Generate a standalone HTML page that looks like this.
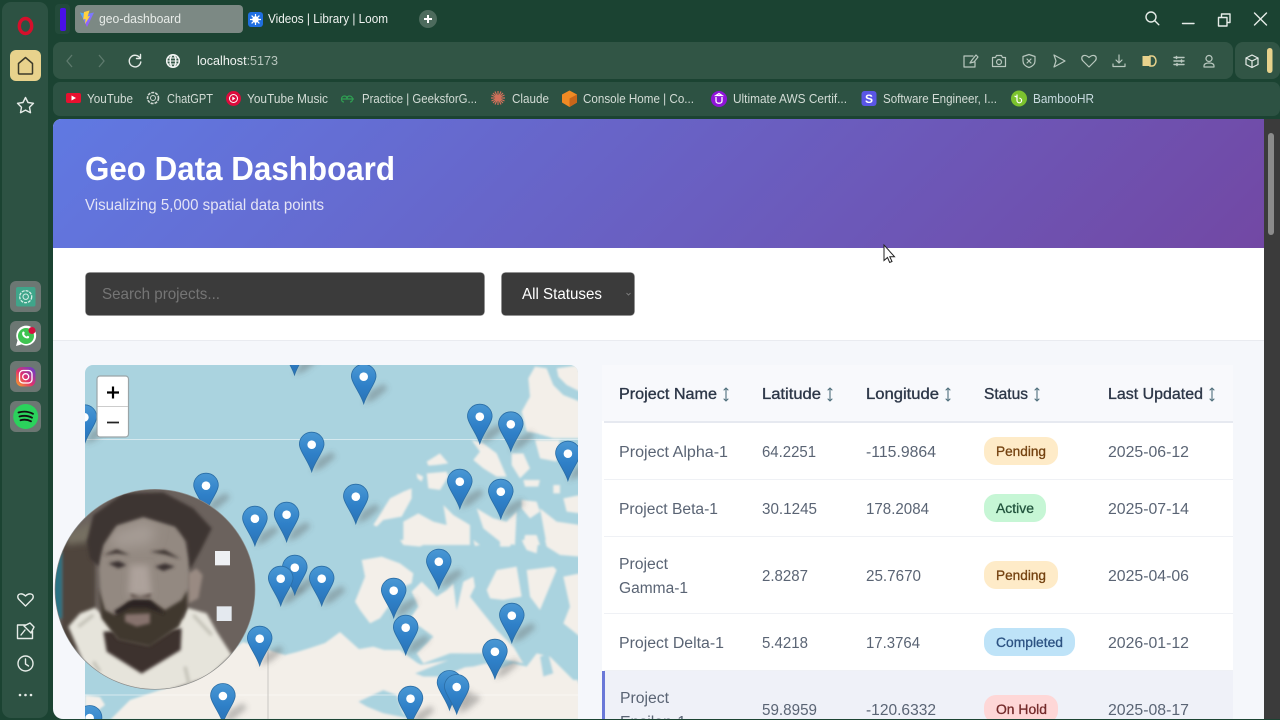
<!DOCTYPE html>
<html lang="en">
<head>
<meta charset="utf-8">
<title>geo-dashboard</title>
<style>
html,body{margin:0;padding:0;width:1280px;height:720px;overflow:hidden;background:#1b4332}
svg{position:absolute;left:0;top:0;display:block}
text{font-family:"Liberation Sans",sans-serif;white-space:pre}
.tb{font-size:13px;fill:#dfe6e1}
.bm{font-size:12.5px;fill:#d3dcd6}
.th{font-size:15.5px;fill:#2d3748;stroke:#2d3748;stroke-width:.35px}
.td{font-size:15.5px;fill:#5a6474}
.bd{font-size:13.5px;stroke-width:.3px}
.ic{fill:none;stroke:#b9c8bf;stroke-width:1.2;stroke-linecap:round;stroke-linejoin:round}
.wi{fill:none;stroke:#e6ece8;stroke-width:1.4;stroke-linecap:round;stroke-linejoin:round}
.ar{fill:none;stroke:#4f6f7c;stroke-width:1.1;stroke-linecap:round;stroke-linejoin:round}
</style>
</head>
<body>
<svg width="1280" height="720" viewBox="0 0 1280 720" xmlns="http://www.w3.org/2000/svg">
<defs>
<linearGradient id="hdr" gradientUnits="userSpaceOnUse" x1="323.7" y1="-150.8" x2="993.3" y2="518.8"><stop offset="0" stop-color="#6079e2"/><stop offset="1" stop-color="#7248a4"/></linearGradient>
<linearGradient id="pg" x1="0" y1="0" x2="0" y2="1"><stop offset="0" stop-color="#4a98d4"/><stop offset=".55" stop-color="#2f80c8"/><stop offset="1" stop-color="#2a72b5"/></linearGradient>
<linearGradient id="ig" x1="0" y1="1" x2="1" y2="0"><stop offset="0" stop-color="#f9a825"/><stop offset=".45" stop-color="#e1306c"/><stop offset="1" stop-color="#5b3fd6"/></linearGradient>
<linearGradient id="vt" x1="0" y1="0" x2="1" y2="1"><stop offset="0" stop-color="#41b8ff"/><stop offset="1" stop-color="#bd34fe"/></linearGradient>
<filter id="b1" x="-10%" y="-10%" width="120%" height="120%"><feGaussianBlur stdDeviation="1.100"/></filter>
<filter id="b2" x="-30%" y="-30%" width="160%" height="160%"><feGaussianBlur stdDeviation="3"/></filter>
<filter id="f4" x="-30%" y="-30%" width="160%" height="160%"><feGaussianBlur stdDeviation="5"/></filter>
<filter id="f8" x="-40%" y="-40%" width="180%" height="180%"><feGaussianBlur stdDeviation="10"/></filter>
<filter id="f16" x="-50%" y="-50%" width="200%" height="200%"><feGaussianBlur stdDeviation="18"/></filter>
<clipPath id="mapc"><path d="M85 720V373a8 8 0 0 1 8-8H570a8 8 0 0 1 8 8V720Z"/></clipPath>
<clipPath id="pagec"><path d="M53 127a8 8 0 0 1 8-8H1264V719H63a10 10 0 0 1-10-10Z"/></clipPath>
<clipPath id="camc"><circle cx="315" cy="313" r="299"/></clipPath>
<symbol id="p" overflow="visible"><path d="M0-12.5C-7-12.5-12.3-7-12.3-.5-12.3 6-3 17 0 27 3 17 12.3 6 12.3-.5 12.3-7 7-12.5 0-12.5Z" fill="url(#pg)" stroke="#2b6ea6" stroke-width=".8"/><circle r="4.300" fill="#fff"/></symbol>
<symbol id="s" overflow="visible"><path d="M0 27L7 14 20 7 24 12 11 23Z" fill="#555" fill-opacity=".36"/></symbol>
</defs>

<!-- browser chrome -->
<rect width="1280" height="720" fill="#1b4332"/>
<rect x="2" y="2" width="46" height="716" rx="9" fill="#2d5243"/>
<rect x="55" y="4" width="15" height="30" rx="4" fill="#234a3a"/>
<rect x="60" y="8" width="6" height="23" rx="2" fill="#4a10e8"/>
<rect x="75" y="5" width="168" height="28" rx="4" fill="#7c8984"/>
<path d="M80 12.500l7 1.500 7-1.500-7 14.500Z" fill="url(#vt)"/><path d="M89.500 10.500l-5.500 1.500-.8 7.500 2.400-.5-.6 5 5-8-2.400.5Z" fill="#ffd23f"/>
<text class="tb" x="99" y="23" textLength="82" lengthAdjust="spacingAndGlyphs" style="fill:#e8ece9">geo-dashboard</text>
<rect x="248" y="12" width="15" height="15" rx="3" fill="#1f6fe0"/>
<circle cx="255.500" cy="19.500" r="3.200" fill="#fff"/><path d="M255.500 14v11M250 19.500h11M251.600 15.600l7.800 7.800M259.400 15.600l-7.800 7.800" stroke="#fff" stroke-width="1.200"/>
<text class="tb" x="268" y="23" textLength="120" lengthAdjust="spacingAndGlyphs" style="fill:#f0f3f1">Videos | Library | Loom</text>
<circle cx="428" cy="19" r="9" fill="#4d6b5d"/><path d="M428 15v8M424 19h8" stroke="#fff" stroke-width="2"/>

<rect x="53" y="42" width="1180" height="37" rx="8" fill="#315545"/>
<rect x="1235" y="42" width="45" height="37" rx="8" fill="#315545"/>
<rect x="53" y="82" width="1227" height="34" rx="7" fill="#2d5243"/>

<path d="M72 55l-5 6 5 6" fill="none" stroke="#5e7a6d" stroke-width="1.300"/>
<path d="M99 55l5 6-5 6" fill="none" stroke="#5e7a6d" stroke-width="1.300"/>
<path class="wi" d="M140 58a5.800 5.800 0 1 0 .8 4M140.500 54.500v4h-4"/>
<g fill="none" stroke="#f2f5f3" stroke-width="1.500"><circle cx="173" cy="61" r="6.300"/><ellipse cx="173" cy="61" rx="2.800" ry="6.300"/><path d="M167 61h12M168 58h10M168 64h10" stroke-width="1.100"/></g>
<text class="tb" x="197" y="65" textLength="81" lengthAdjust="spacingAndGlyphs"><tspan fill="#f0f3f1">localhost</tspan><tspan fill="#b7c5bd">:5173</tspan></text>

<!-- toolbar icons -->
<g class="ic">
<path d="M973 56h-9v11h11v-5M970 63l2-3 4-5 2 2-4 5Z"/>
<path d="M992.500 57.500h3l1-2h5l1 2h3v9h-13ZM999 59.500a2.500 2.500 0 1 0 .01 0"/>
<path d="M1029 54.500l6 2v4.500c0 3.500-3 5.500-6 6.500-3-1-6-3-6-6.500v-4.500ZM1027 59l4 4M1031 59l-4 4"/>
<path d="M1054 55l11 6-11 6 2-6Z"/>
<path d="M1089 67l-6-6c-2-2-1.500-5 1-5.500 2-.4 3.500.5 5 2 1.500-1.500 3-2.400 5-2 2.500.5 3 3.500 1 5.500Z"/>
<path d="M1119 55v8M1116 60l3 3 3-3M1113 64v2.500h12V64"/>
<path d="M1174 57.500h10M1174 61h10M1174 64.500h10" style="stroke-width:1.400"/>
<path d="M1176.500 56.500v2M1181.500 60v2M1177 63.500v2" style="stroke-width:1.600"/>
<path d="M1209 55.500a3 3 0 1 0 .01 0M1204 67v-1c0-2 2-3 5-3s5 1 5 3v1Z"/>
<path d="M1252 55l6 3v6.500l-6 3-6-3V58ZM1246 58l6 3 6-3M1252 61v6.500" style="stroke:#e6ece8"/>
</g>
<path d="M1142.500 56h7.500v10h-7.500Z" fill="#e8d28c"/><path d="M1150 56h2c2 0 4 2 4 5s-2 5-4 5h-2Z" fill="none" stroke="#e8d28c" stroke-width="1.500"/>
<rect x="1267" y="48" width="5.500" height="25" rx="2.700" fill="#e8d28c"/>

<!-- window controls -->
<g class="wi">
<circle cx="1151" cy="17" r="5"/><path d="M1154.800 20.800l4 4"/>
<path d="M1182.500 23.500h11.500"/>
<path d="M1218.500 17.500h8.500v8.500h-8.500ZM1221.500 17.500v-3.500h8.500v8.500h-3"/>
<path d="M1254.500 13l12 12M1266.500 13l-12 12"/>
</g>

<!-- bookmarks -->
<rect x="66" y="93" width="15" height="10" rx="2" fill="#e8102f"/><path d="M71.500 95.500l4.500 2.500-4.500 2.500Z" fill="#fff"/>
<text class="bm" x="87" y="103" textLength="46" lengthAdjust="spacingAndGlyphs">YouTube</text>
<circle cx="153" cy="98" r="5.500" fill="none" stroke="#cfd8d2" stroke-width="1.600" stroke-dasharray="3 1"/><circle cx="153" cy="98" r="2.500" fill="none" stroke="#cfd8d2"/>
<text class="bm" x="167" y="103" textLength="46" lengthAdjust="spacingAndGlyphs">ChatGPT</text>
<circle cx="233.500" cy="98.500" r="7.500" fill="#dc0b3c"/><circle cx="233.500" cy="98.500" r="4" fill="none" stroke="#fff"/><path d="M232.300 96.500l3 2-3 2Z" fill="#fff"/>
<text class="bm" x="247" y="103" textLength="81" lengthAdjust="spacingAndGlyphs">YouTube Music</text>
<path d="M341 99h6c0-2-1-3-2.500-3s-3 1-3 3 1 3 2.500 3M354 99h-7c0-2 1-3 2.500-3s3 1 3 3-1 3-2.500 3" fill="none" stroke="#2f9e52" stroke-width="1.200"/>
<text class="bm" x="362" y="103" textLength="115" lengthAdjust="spacingAndGlyphs">Practice | GeeksforG...</text>
<path d="M498 91v14M491 98h14M493 93l10 10M503 93l-10 10M495 91.500l6 13M501 91.500l-6 13M491.500 95l13 6M504.500 95l-13 6" stroke="#d2705a" stroke-width="1.200"/>
<text class="bm" x="512" y="103" textLength="37" lengthAdjust="spacingAndGlyphs">Claude</text>
<path d="M569.500 90.500l7.500 4v8l-7.500 4.500-7.500-4.500v-8Z" fill="#f08a24"/><path d="M569.500 98.500l7.500-4v8l-7.500 4.500Z" fill="#c9661a"/>
<text class="bm" x="583" y="103" textLength="111" lengthAdjust="spacingAndGlyphs">Console Home | Co...</text>
<circle cx="719" cy="99" r="8" fill="#8f14d8"/><path d="M716 97v4c0 3 6 3 6 0v-4M719 93.500l3 2h-6Z" fill="none" stroke="#fff" stroke-width="1.300"/>
<text class="bm" x="733" y="103" textLength="114" lengthAdjust="spacingAndGlyphs">Ultimate AWS Certif...</text>
<rect x="861.500" y="91" width="15" height="15" rx="3" fill="#5a56e6"/>
<text x="869" y="103" text-anchor="middle" style="font-size:12px;font-weight:700;fill:#fff">S</text>
<text class="bm" x="883" y="103" textLength="114" lengthAdjust="spacingAndGlyphs">Software Engineer, I...</text>
<circle cx="1019" cy="98.500" r="8" fill="#7cc22e"/><path d="M1017 94.500v6a2.300 2.300 0 1 0 2.300-2.300M1014.500 96l2 1" fill="none" stroke="#fff" stroke-width="1.200"/>
<text class="bm" x="1033" y="103" textLength="61" lengthAdjust="spacingAndGlyphs" style="fill:#c9dbe0">BambooHR</text>

<!-- sidebar -->
<ellipse cx="25.500" cy="26" rx="6.200" ry="7.500" fill="none" stroke="#d50f2b" stroke-width="3.400"/>
<rect x="10" y="50" width="31" height="31" rx="6" fill="#e8d28c"/>
<path d="M18.500 73V63.500l7-6 7 6V73a1 1 0 0 1-1 1h-12a1 1 0 0 1-1-1Z" fill="none" stroke="#3c3a2a" stroke-width="1.500" stroke-linejoin="round"/>
<path class="wi" d="M25.500 97.500l2.500 5 5.500.8-4 3.900 1 5.500-5-2.600-5 2.600 1-5.500-4-3.900 5.500-.8Z"/>
<rect x="10" y="281" width="31" height="31" rx="6" fill="#6c7773"/>
<rect x="16" y="287" width="19.500" height="19.500" rx="2" fill="#3fa58a"/>
<circle cx="25.700" cy="296.700" r="6" fill="none" stroke="#d7efe8" stroke-width="1.300" stroke-dasharray="3 1"/><circle cx="25.700" cy="296.700" r="2.700" fill="none" stroke="#d7efe8"/>
<rect x="10" y="321" width="31" height="31" rx="6" fill="#6c7773"/>
<path d="M16 346l1.500-5.500a10 10 0 1 1 4 3.900Z" fill="#fff"/><circle cx="26" cy="336" r="8" fill="#3fc451"/>
<path d="M22.500 332c1-1 1.800-.6 2.300 1l-.7 1c.5 1.200 1.300 2 2.600 2.600l1-.8c1.500.5 2 1.300 1 2.300-3.500 1.500-8-3-6.200-6.100Z" fill="#fff"/>
<circle cx="32" cy="330.500" r="3.500" fill="#d3103f"/>
<rect x="10" y="361" width="31" height="31" rx="6" fill="#6c7773"/>
<rect x="16" y="367" width="19.500" height="19.500" rx="6" fill="url(#ig)"/>
<rect x="19.500" y="370.500" width="12.500" height="12.500" rx="3.500" fill="none" stroke="#fff" stroke-width="1.300"/><circle cx="25.700" cy="376.700" r="3" fill="none" stroke="#fff" stroke-width="1.300"/>
<rect x="10" y="401" width="31" height="31" rx="6" fill="#6c7773"/>
<circle cx="25.700" cy="416.500" r="12.500" fill="#2bd25c"/>
<path d="M18.500 412.500c5-1.500 10-1 14.500 1.300M19.500 416.500c4.500-1.200 9-.7 12.500 1.200M20.500 420.300c3.500-1 7.500-.6 10.500 1" fill="none" stroke="#111" stroke-width="1.800" stroke-linecap="round"/>
<g class="wi">
<path d="M25.500 606l-6.500-6.500c-2-2-1.500-5 1-5.500 2.300-.5 4 .5 5.500 2 1.500-1.500 3.200-2.500 5.500-2 2.500.5 3 3.500 1 5.500Z"/>
<path d="M26 625h-8.500v13.500h15V631M21 635l4-5M24 626l6-3 4 4-3 6Z"/>
<circle cx="25.500" cy="663.500" r="7.500"/><path d="M25.500 659v5l3 2"/>
</g>
<circle cx="20" cy="695" r="1.300" fill="#e6ece8"/><circle cx="25.500" cy="695" r="1.300" fill="#e6ece8"/><circle cx="31" cy="695" r="1.300" fill="#e6ece8"/>

<!-- scrollbar -->
<rect x="1264" y="119" width="16" height="600" fill="#3b3b3b"/>
<rect x="1268" y="133" width="6" height="102" rx="3" fill="#8b8b8b"/>

<!-- page -->
<g clip-path="url(#pagec)">
<rect x="53" y="119" width="1211" height="601" fill="#f5f7fb"/>
<rect x="53" y="119" width="1211" height="129" fill="url(#hdr)"/>
<text x="85" y="180" textLength="310" lengthAdjust="spacingAndGlyphs" style="font-size:33px;font-weight:700;fill:#fff">Geo Data Dashboard</text>
<text x="85" y="210" textLength="239" lengthAdjust="spacingAndGlyphs" style="font-size:15.5px;fill:#e4e4f6">Visualizing 5,000 spatial data points</text>
<rect x="53" y="248" width="1211" height="92" fill="#fff"/>
<rect x="53" y="340" width="1211" height="1" fill="#e9ebf0"/>
<rect x="85.500" y="272.500" width="399" height="43" rx="4" fill="#3b3b3b" stroke="#8a8a8a" stroke-width=".6"/>
<text x="102" y="299" textLength="118" lengthAdjust="spacingAndGlyphs" style="font-size:16px;fill:#757575">Search projects...</text>
<rect x="501.500" y="272.500" width="133" height="43" rx="4" fill="#3b3b3b" stroke="#8a8a8a" stroke-width=".6"/>
<text x="522" y="299" textLength="80" lengthAdjust="spacingAndGlyphs" style="font-size:16px;fill:#fff">All Statuses</text>
<path d="M626.500 293l2 2 2-2" fill="none" stroke="#888" stroke-width=".8"/>

<!-- map -->
<g clip-path="url(#mapc)">
<rect x="85" y="365" width="493" height="355" fill="#aad3df"/>
<g fill="#f3efe9" filter="url(#b1)">
<path d="M110 720L130 700 190 680 243 642 262 648 285 655 297 652 310 648 325 643 340 632 360 650 400 650 420 665 450 660 480 680 578 680V720Z"/>
<path d="M85 695L100 697 105 705 92 715 85 716Z"/>
<g transform="translate(340 365) scale(.3333)">
<path d="M585 5L620 10 640 60 670 90 720 110V220H640L590 205 560 200 545 140 570 95 565 40Z"/>
<path d="M650 10L720 0V80L680 60 655 35Z"/>
<path d="M395 225L430 235 470 265 500 335 470 335 430 310 400 285 420 260Z"/>
<path d="M515 265L550 265 570 310 540 340 515 300Z"/>
<path d="M585 225H660L650 290 600 280Z"/>
<path d="M260 290L300 265 325 295 290 300 265 302Z"/>
<path d="M260 325L320 320 325 335 300 375 265 370Z"/>
<path d="M230 325L250 335 245 350 232 340Z"/>
<path d="M100 480L150 400 190 380 215 370 215 400 185 455 130 465 110 485Z"/>
<path d="M190 470L235 445 280 470 320 480 310 420 340 450 390 480V540H190Z"/>
<path d="M410 430L460 460 500 470 530 440 525 540 480 530 430 490Z"/>
<path d="M545 405L590 410 600 440 570 460 545 430Z"/>
<path d="M600 430L650 470 720 480V540H620Z"/>
<path d="M640 360H660V385H640ZM550 345H600L595 365 555 365Z"/>
<path d="M670 400L720 390V445L680 440Z"/>
<path d="M555 510H590L600 540H550Z"/>
</g>
<g transform="translate(340 540) scale(.3333)">
<path d="M65 60L125 50 180 70 220 100 215 130 165 150 160 180 120 235 90 250 60 210 45 185 75 110Z"/>
<path d="M0 280L40 330 100 320 180 345 245 375 230 400 260 410 310 390 340 385 400 380 440 370 470 390 520 370 560 380 590 340 630 350 700 420 720 430V540H0Z"/>
<path d="M215 155L245 125 290 170 320 150 340 130 350 210 370 125 400 110 405 140 390 170 430 220 470 270 520 320 550 370 500 360 470 340 400 340 330 340 250 370 230 340 260 310 280 290 240 260 200 250 235 200Z"/>
<path d="M440 150L470 90 530 80 545 170 490 180 450 175Z"/>
<path d="M560 90L640 80 650 90 625 150 600 210 570 170Z"/>
<path d="M670 110L720 100V290L670 250 690 200Z"/>
<path d="M180 0H280L240 20 190 15ZM400 0L420 15 405 18ZM480 0H520L510 20 480 20ZM545 0H595L590 40 560 30ZM615 0H720V50L660 45 620 20Z"/>
<path d="M55 485L130 450 170 465 190 520 230 540 130 520 80 500Z" fill="#aad3df"/>
<path d="M225 400L300 370 380 340 440 350 440 370 380 380 310 410 250 410Z" fill="#aad3df"/>
<path d="M600 350L625 340 640 400 610 410Z" fill="#aad3df"/>
</g>
</g>
<path d="M85 439.500H578M85 695H578" stroke="#fff" stroke-opacity=".5" stroke-width="1"/>
<path d="M268 641V720" stroke="#c9c7c2" stroke-width="1"/>
<g filter="url(#b2)">
<use href="#s" x="294.500" y="348"/><use href="#s" x="363.700" y="376.700"/><use href="#s" x="479.800" y="416.700"/><use href="#s" x="510.800" y="424.300"/><use href="#s" x="84.400" y="417.300"/><use href="#s" x="311.700" y="444.700"/><use href="#s" x="567.900" y="453.700"/><use href="#s" x="206" y="485.700"/><use href="#s" x="355.800" y="496.700"/><use href="#s" x="459.800" y="481.700"/><use href="#s" x="500.800" y="491.700"/><use href="#s" x="254.900" y="518.700"/><use href="#s" x="286.600" y="514.700"/><use href="#s" x="294.800" y="567.700"/><use href="#s" x="280.700" y="578.700"/><use href="#s" x="321.700" y="578.700"/><use href="#s" x="438.800" y="561.700"/><use href="#s" x="393.700" y="590.700"/><use href="#s" x="405.700" y="627.700"/><use href="#s" x="511.800" y="615.700"/><use href="#s" x="494.900" y="651.700"/><use href="#s" x="259.700" y="638.700"/><use href="#s" x="449.500" y="683"/><use href="#s" x="456.700" y="687"/><use href="#s" x="410.500" y="698.700"/><use href="#s" x="222.900" y="696"/><use href="#s" x="89.600" y="718"/>
</g>
<use href="#p" x="294.500" y="348"/><use href="#p" x="363.700" y="376.700"/><use href="#p" x="479.800" y="416.700"/><use href="#p" x="510.800" y="424.300"/><use href="#p" x="84.400" y="417.300"/><use href="#p" x="311.700" y="444.700"/><use href="#p" x="567.900" y="453.700"/><use href="#p" x="206" y="485.700"/><use href="#p" x="355.800" y="496.700"/><use href="#p" x="459.800" y="481.700"/><use href="#p" x="500.800" y="491.700"/><use href="#p" x="254.900" y="518.700"/><use href="#p" x="286.600" y="514.700"/><use href="#p" x="294.800" y="567.700"/><use href="#p" x="280.700" y="578.700"/><use href="#p" x="321.700" y="578.700"/><use href="#p" x="438.800" y="561.700"/><use href="#p" x="393.700" y="590.700"/><use href="#p" x="405.700" y="627.700"/><use href="#p" x="511.800" y="615.700"/><use href="#p" x="494.900" y="651.700"/><use href="#p" x="259.700" y="638.700"/><use href="#p" x="449.500" y="683"/><use href="#p" x="456.700" y="687"/><use href="#p" x="410.500" y="698.700"/><use href="#p" x="222.900" y="696"/><use href="#p" x="89.600" y="718"/>
<rect x="97" y="376" width="31.500" height="61" rx="3" fill="#fff" stroke="#9aa5a8" stroke-width="1.200"/>
<path d="M97.500 406.500h30.500" stroke="#ccc"/>
<path d="M107 392.500h12M113 386.500v12" stroke="#000" stroke-width="2.200"/>
<path d="M107 422.500h12" stroke="#222" stroke-width="1.800"/>
</g>

<!-- table -->
<rect x="602" y="365" width="631" height="355" fill="#fff"/>
<rect x="602" y="365" width="631" height="56" fill="#f8f9fc"/>
<rect x="604" y="421" width="629" height="2" fill="#e6e9f0"/>
<path d="M604 479.500H1233M604 536.500H1233M604 613.500H1233M604 670.500H1233" stroke="#eff1f5"/>
<rect x="602" y="671" width="631" height="49" fill="#eff1f8"/>
<rect x="602" y="671" width="3" height="49" fill="#6a78d8"/>

<text class="th" x="619" y="399" textLength="98" lengthAdjust="spacingAndGlyphs">Project Name</text>
<text class="th" x="762" y="399" textLength="59" lengthAdjust="spacingAndGlyphs">Latitude</text>
<text class="th" x="866" y="399" textLength="73" lengthAdjust="spacingAndGlyphs">Longitude</text>
<text class="th" x="984" y="399" textLength="44" lengthAdjust="spacingAndGlyphs">Status</text>
<text class="th" x="1108" y="399" textLength="95" lengthAdjust="spacingAndGlyphs">Last Updated</text>
<g class="ar">
<path d="M726 388v13M724 390l2-2 2 2M724 399l2 2 2-2"/>
<path d="M830 388v13M828 390l2-2 2 2M828 399l2 2 2-2"/>
<path d="M948 388v13M946 390l2-2 2 2M946 399l2 2 2-2"/>
<path d="M1037 388v13M1035 390l2-2 2 2M1035 399l2 2 2-2"/>
<path d="M1212 388v13M1210 390l2-2 2 2M1210 399l2 2 2-2"/>
</g>

<text class="td" x="619" y="457" textLength="109" lengthAdjust="spacingAndGlyphs">Project Alpha-1</text>
<text class="td" x="762" y="457" textLength="54" lengthAdjust="spacingAndGlyphs">64.2251</text>
<text class="td" x="866" y="457" textLength="70" lengthAdjust="spacingAndGlyphs">-115.9864</text>
<rect x="984" y="437" width="74" height="28" rx="12" fill="#feebc8"/>
<text class="bd" x="996" y="456" textLength="50" lengthAdjust="spacingAndGlyphs" fill="#744210" stroke="#744210">Pending</text>
<text class="td" x="1108" y="457" textLength="81" lengthAdjust="spacingAndGlyphs">2025-06-12</text>

<text class="td" x="619" y="514" textLength="99" lengthAdjust="spacingAndGlyphs">Project Beta-1</text>
<text class="td" x="762" y="514" textLength="55" lengthAdjust="spacingAndGlyphs">30.1245</text>
<text class="td" x="866" y="514" textLength="63" lengthAdjust="spacingAndGlyphs">178.2084</text>
<rect x="984" y="494" width="62" height="28" rx="12" fill="#c6f6d5"/>
<text class="bd" x="996" y="513" textLength="38" lengthAdjust="spacingAndGlyphs" fill="#22543d" stroke="#22543d">Active</text>
<text class="td" x="1108" y="514" textLength="81" lengthAdjust="spacingAndGlyphs">2025-07-14</text>

<text class="td" x="619" y="569" textLength="49" lengthAdjust="spacingAndGlyphs">Project</text>
<text class="td" x="619" y="593" textLength="69" lengthAdjust="spacingAndGlyphs">Gamma-1</text>
<text class="td" x="762" y="581" textLength="46" lengthAdjust="spacingAndGlyphs">2.8287</text>
<text class="td" x="866" y="581" textLength="55" lengthAdjust="spacingAndGlyphs">25.7670</text>
<rect x="984" y="561" width="74" height="28" rx="12" fill="#feebc8"/>
<text class="bd" x="996" y="580" textLength="50" lengthAdjust="spacingAndGlyphs" fill="#744210" stroke="#744210">Pending</text>
<text class="td" x="1108" y="581" textLength="81" lengthAdjust="spacingAndGlyphs">2025-04-06</text>

<text class="td" x="619" y="648" textLength="105" lengthAdjust="spacingAndGlyphs">Project Delta-1</text>
<text class="td" x="762" y="648" textLength="46" lengthAdjust="spacingAndGlyphs">5.4218</text>
<text class="td" x="866" y="648" textLength="54" lengthAdjust="spacingAndGlyphs">17.3764</text>
<rect x="984" y="628" width="91" height="28" rx="12" fill="#bee3f8"/>
<text class="bd" x="996" y="647" textLength="67" lengthAdjust="spacingAndGlyphs" fill="#2c5282" stroke="#2c5282">Completed</text>
<text class="td" x="1108" y="648" textLength="81" lengthAdjust="spacingAndGlyphs">2026-01-12</text>

<text class="td" x="620" y="703" textLength="49" lengthAdjust="spacingAndGlyphs">Project</text>
<text class="td" x="620" y="727" textLength="66" lengthAdjust="spacingAndGlyphs">Epsilon-1</text>
<text class="td" x="762" y="715" textLength="55" lengthAdjust="spacingAndGlyphs">59.8959</text>
<text class="td" x="866" y="715" textLength="70" lengthAdjust="spacingAndGlyphs">-120.6332</text>
<rect x="984" y="695" width="74" height="28" rx="12" fill="#fed7d7"/>
<text class="bd" x="996" y="714" textLength="51" lengthAdjust="spacingAndGlyphs" fill="#742a2a" stroke="#742a2a">On Hold</text>
<text class="td" x="1108" y="715" textLength="81" lengthAdjust="spacingAndGlyphs">2025-08-17</text>
</g>

<!-- cursor -->
<path d="M884 245v15.500l3.500-3 2.200 5 2.300-1-2.200-4.800h4.700Z" fill="#fff" stroke="#222" stroke-width="1"/>

<!-- webcam bubble -->
<g transform="translate(50 485) scale(.33333)">
<circle cx="315" cy="313" r="301" fill="#8a8c8b"/>
<g clip-path="url(#camc)">
<rect x="0" y="0" width="630" height="630" fill="#6b625d"/>
<rect x="35" y="160" width="100" height="330" fill="#50443e" filter="url(#f4)"/>
<rect x="10" y="200" width="26" height="200" fill="#2a7385" filter="url(#f4)"/>
<path d="M40 150L130 110 130 170 50 180Z" fill="#766f62" filter="url(#f8)"/>
<rect x="495" y="198" width="45" height="43" fill="#eef0f3"/>
<rect x="500" y="364" width="45" height="44" fill="#e4e9ef"/>
<path d="M55 425L90 385 135 368 170 400 400 400 410 368 470 385 500 440 545 510 480 575 330 625 170 600 100 530Z" fill="#e6e4db" filter="url(#f4)"/>
<path d="M160 440L395 430 392 495 275 566 170 500Z" fill="#3d332e" filter="url(#f4)"/>
<path d="M85 425L130 390M430 390L485 450M405 545L418 600M130 530L150 560" stroke="#c4c2b8" stroke-width="10" fill="none" filter="url(#f4)"/>
<path d="M145 210L170 130 280 95 395 125 418 220 415 340 385 425 295 480 205 460 155 390Z" fill="#938981" filter="url(#f4)"/>
<path d="M175 150L280 110 320 130 300 180 200 190Z" fill="#a59b94" filter="url(#f16)"/>
<path d="M240 240L295 240 305 330 235 330Z" fill="#ada29b" filter="url(#f8)"/>
<path d="M415 265L440 250 458 270 445 340 415 355Z" fill="#998a82" filter="url(#f4)"/>
<path d="M145 310L165 375 195 390 235 350 300 345 345 375 395 345 412 315 412 370 385 425 300 485 205 465 155 400Z" fill="#41372f" filter="url(#f4)"/>
<path d="M192 378L250 343 300 346 345 388 290 368 240 368 200 390Z" fill="#2a2321" filter="url(#f4)"/>
<path d="M225 388L300 385 300 415 260 425 225 410Z" fill="#86726d" filter="url(#f4)"/>
<path d="M110 170L130 90 220 25 340 22 430 70 485 130 450 200 420 255 410 170 375 125 280 95 200 120 160 180 145 245 120 220Z" fill="#3c3432" filter="url(#f4)"/>
<path d="M160 210L200 193 240 210 200 205ZM300 200L345 195 392 222 345 208Z" fill="#3a302d" filter="url(#f4)"/>
<path d="M175 235L205 228 230 240 205 250ZM315 245L345 235 375 245 340 258Z" fill="#3a3330" filter="url(#f4)"/>
<path d="M240 325L270 335 305 325 300 338 245 338Z" fill="#5d504a" filter="url(#f4)"/>
</g>
</g>
</svg>
</body>
</html>
